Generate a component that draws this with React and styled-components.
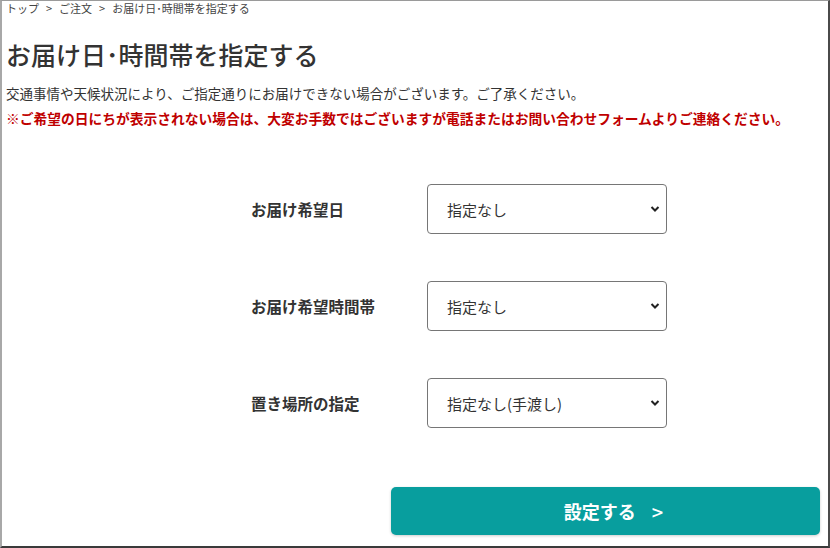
import { Fragment } from "react";
import styled, { createGlobalStyle } from "styled-components";

const Global = createGlobalStyle`
  html, body { margin: 0; padding: 0; background: #fff; }
  body { font-family: "Noto Sans CJK JP", "Noto Sans", sans-serif; color: #333; }
  * { box-sizing: border-box; }
`;

const Frame = styled.div`
  width: 830px;
  height: 548px;
  border-top: 1px solid #9a9a9a;
  border-left: 2px solid #a8a8a8;
  border-right: 2px solid #4a4a4a;
  border-bottom: 2px solid #3a3a3a;
  padding: 0 0 0 4px;
  display: flex;
  flex-direction: column;
  overflow: hidden;
`;

const Crumbs = styled.div`
  font-size: 11px;
  line-height: 14px;
  color: #444;
  display: flex;
  gap: 7px;
`;

const Title = styled.h1`
  margin: 22px 0 0;
  font-size: 25px;
  line-height: 34px;
  font-weight: 500;
  color: #333;
`;

const Note = styled.p`
  margin: 0;
  font-size: ${(p) => (p.$warn ? "13.75px" : "13.5px")};
  line-height: 25px;
  color: ${(p) => (p.$warn ? "#bf0000" : "#333")};
  font-weight: ${(p) => (p.$warn ? 700 : 400)};
  white-space: nowrap;
`;

const Notes = styled.div`
  margin-top: 10px;
`;

const Form = styled.div`
  margin: 53px 0 0 245px;
  display: grid;
  grid-template-columns: 176px 240px;
  row-gap: 47px;
  align-items: center;
`;

const Label = styled.label`
  font-size: 15.5px;
  font-weight: 700;
  color: #333;
`;

const SelectWrap = styled.div`
  position: relative;
  width: 240px;
  height: 50px;
`;

const Select = styled.select`
  appearance: none;
  width: 100%;
  height: 100%;
  border: 1px solid #767676;
  border-radius: 4px;
  background: #fff;
  padding: 0 30px 0 19px;
  font-family: inherit;
  font-size: 15px;
  color: #333;
`;

const Chevron = styled.svg`
  position: absolute;
  right: 7px;
  top: 21px;
  width: 10px;
  height: 8px;
  pointer-events: none;
`;

const Footer = styled.div`
  margin-top: 59px;
  display: flex;
  justify-content: flex-end;
  padding-right: 8px;
`;

const Button = styled.button`
  width: 429px;
  height: 48px;
  border: none;
  border-radius: 5px;
  background: #089e9e;
  color: #fff;
  font-family: inherit;
  font-size: 18px;
  font-weight: 700;
  box-shadow: 0 1px 3px rgba(0, 0, 0, 0.2);
  display: flex;
  align-items: center;
  justify-content: center;
  gap: 16px;
  padding-left: 22px;
`;

const Arrow = styled.span`
  font-size: 20px;
  font-weight: 500;
`;

const fields = [
  { label: "お届け希望日", value: "指定なし" },
  { label: "お届け希望時間帯", value: "指定なし" },
  { label: "置き場所の指定", value: "指定なし(手渡し)" },
];

export default function App() {
  return (
    <>
      <Global />
      <Frame>
        <Crumbs>
          <span>トップ</span>
          <span>&gt;</span>
          <span>ご注文</span>
          <span>&gt;</span>
          <span>お届け日･時間帯を指定する</span>
        </Crumbs>
        <Title>お届け日･時間帯を指定する</Title>
        <Notes>
          <Note>交通事情や天候状況により、ご指定通りにお届けできない場合がございます。ご了承ください。</Note>
          <Note $warn>
            ※ご希望の日にちが表示されない場合は、大変お手数ではございますが電話またはお問い合わせフォームよりご連絡ください。
          </Note>
        </Notes>
        <Form>
          {fields.map((f) => (
            <Fragment key={f.label}>
              <Label>{f.label}</Label>
              <SelectWrap>
                <Select defaultValue={f.value}>
                  <option>{f.value}</option>
                </Select>
                <Chevron viewBox="0 0 10 8">
                  <path d="M1.5 2 L5 5.5 L8.5 2" fill="none" stroke="#222" strokeWidth="2" />
                </Chevron>
              </SelectWrap>
            </Fragment>
          ))}
        </Form>
        <Footer>
          <Button>
            <span>設定する</span>
            <Arrow>&gt;</Arrow>
          </Button>
        </Footer>
      </Frame>
    </>
  );
}
